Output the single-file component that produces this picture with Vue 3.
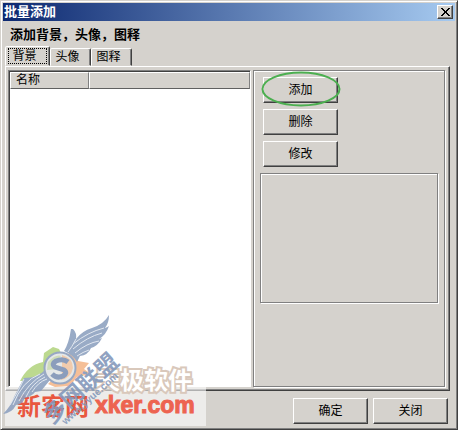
<template>
    <main class="window">
        <header class="title-bar">
            <h1>批量添加</h1>
            <button class="close-btn" type="button" aria-label="关闭">
                <svg width="9" height="8" viewBox="0 0 9 8" shape-rendering="crispEdges">
                    <path d="M0 0h2v1h1v1h1v1h1V2h1V1h1V0h2v1H8v1H7v1H6v2h1v1h1v1h1v1H7V7H6V6H5V5H4v1H3v1H2v1H0V7h1V6h1V5h1V3H2V2H1V1H0z" />
                </svg>
            </button>
        </header>

        <h2>添加背景，头像，图释</h2>

        <div class="tabs" role="tablist">
            <button v-for="tab in tabs" :key="tab" type="button" role="tab" :aria-selected="currentTab === tab"
                :class="{ active: currentTab === tab }" @click="currentTab = tab">
                <span>{{ tab }}</span>
            </button>
        </div>

        <section class="panel">
            <div class="list">
                <table>
                    <thead>
                        <tr>
                            <th class="name-col">名称</th>
                            <th></th>
                        </tr>
                    </thead>
                </table>
            </div>
            <div class="group">
                <div v-for="action in actions" :key="action" class="action">
                    <button class="btn" type="button">{{ action }}</button>
                    <svg v-if="action === '添加'" class="marker" width="80" height="36" viewBox="0 0 80 36">
                        <ellipse cx="40" cy="18" rx="38.5" ry="16.5" />
                    </svg>
                </div>
                <div class="preview"></div>
            </div>
        </section>

        <footer class="footer">
            <button class="btn" type="button">确定</button>
            <button class="btn" type="button">关闭</button>
        </footer>

        <svg class="watermark" width="208" height="122" viewBox="0 306 208 122">
            <rect x="4" y="386" width="201" height="39" fill="#fff" opacity=".58" />
            <text class="brand-back" x="95" y="388">天极软件</text>
            <text class="site-cn" x="16" y="414">新客网</text>
            <text class="site-en" x="94" y="412">xker.com</text>
            <g class="emblem">
                <path fill="#b5d583" d="M19 380q8-16 23-19l1-9 9-6 6 2 3 6-15 10-5 18q-12-3-22-2z" />
                <path fill="#f5b98c" d="M59 352l13 1 5 7 11 2-5 6 7 5-14 3-7 9-15 1-7-3 13-13z" />
                <path class="wing" d="M63 350q5-8 7-22h2q4 4 3 10 6-8 16-11 12-4 17-13 0 8-4 13 3-1 4-2-3 9-10 13l3-1q-4 8-11 10-3 7-11 8l-3 6q-4-7-13-11z" />
                <path class="wing" d="M45 368q-8 9-22 9-5 9-10 19-3 9-11 17 9-1 13-9 6 0 9-7 7-2 10-6l6-1 9-11q-5-4-4-11z" />
                <g class="feathers">
                    <path d="M75 338q-4 8-8 13M103 327q-16 4-31 16M101 332q-15 4-29 16M98 340q-12 2-24 12M88 349q-6 2-12 6" />
                    <path d="M39 373q-18 7-27 31M43 373q-16 9-25 27M44 376q-13 6-19 20M46 378q-9 3-15 13M23 378q-6 13-14 26" />
                </g>
                <circle cx="59" cy="367" r="15.5" fill="#e3e6e6" stroke="#8d9fbd" stroke-width="2" />
                <path fill="#f0c6a5" d="M61 354q11 3 11 13-2 10-12 12l1-9z" />
                <path fill="#cadab2" d="M47 361q8-8 13-6l-8 9 4 4-10 1z" />
                <path class="letter" d="M67 361q-5-4-12-1-5 3-1 6l9 3q4 3-1 6-6 3-11-2" />
                <g transform="translate(51 424) rotate(-42)">
                    <text class="league" x="0" y="0">多网联盟</text>
                    <text class="league-url" x="10" y="9">www.yyue.com</text>
                </g>
            </g>
        </svg>
    </main>
</template>

<script setup>
import { ref } from 'vue';

const tabs = ['背景', '头像', '图释'];
const currentTab = ref('背景');

const actions = ['添加', '删除', '修改'];
</script>

<style>
body {
    background: #d5d2cd;
}
</style>

<style scoped>
.window {
    position: relative;
    box-sizing: border-box;
    min-height: 100vh;
    display: flex;
    flex-direction: column;
    padding: 1px;
    border: 1px solid #d5d2cd;
    border-right: 1px solid #404040;
    border-bottom: 1px solid #404040;
    box-shadow: inset 1px 1px #fff, inset -1px -1px #808080;
    background: #d5d2cd;
    color: #000;
    font: 12px/16px "Liberation Sans", "Noto Sans CJK SC", sans-serif;
}

button {
    font: inherit;
    color: inherit;
    padding: 0;
}

.title-bar {
    display: flex;
    align-items: center;
    justify-content: space-between;
    height: 18px;
    margin: 1px 1px 0;
    padding: 0 2px 0 1px;
    background: linear-gradient(90deg, #0c2870, #a6caf0);
}

h1,
h2 {
    margin: 0;
    font-size: 13px;
    line-height: 18px;
}

h1 {
    color: #fff;
}

h2 {
    padding: 5px 8px 2px;
}

.close-btn {
    display: flex;
    align-items: center;
    justify-content: center;
    width: 16px;
    height: 14px;
    border: 1px solid;
    border-color: #fff #404040 #404040 #fff;
    box-shadow: inset -1px -1px #808080;
    background: #d5d2cd;
}

.tabs {
    display: flex;
    align-items: flex-end;
    height: 20px;
    padding-left: 3px;
}

.tabs button {
    height: 18px;
    width: 41px;
    border: 1px solid;
    border-color: #fff #404040 transparent #fff;
    border-radius: 2px 2px 0 0;
    box-shadow: inset -1px 0 #808080;
    background: #d5d2cd;
}

.tabs .active {
    width: 45px;
    height: 20px;
}

.tabs span {
    display: block;
    padding-right: 6px;
    line-height: 16px;
}

.tabs .active span {
    margin: 0 2px;
    border: 1px dotted #000;
    line-height: 14px;
}

.panel {
    flex: 1;
    display: flex;
    gap: 2px;
    margin: 0 6px 0 3px;
    padding: 3px 3px 3px 2px;
    border: 1px solid;
    border-color: #fff #404040 #404040 #fff;
    box-shadow: inset -1px -1px #808080;
}

.list {
    flex: 1;
    border: 1px solid;
    border-color: #808080 #fff #fff #808080;
    box-shadow: inset 1px 1px #404040;
    background: #fff;
    padding: 1px 0 0 1px;
}

table {
    width: 100%;
    border-collapse: separate;
    border-spacing: 0;
    table-layout: fixed;
}

th {
    height: 15px;
    padding: 0 5px;
    border: 1px solid;
    border-color: #fff #808080 #606060 #fff;
    background: #d5d2cd;
    font-weight: normal;
    line-height: 15px;
    text-align: left;
}

.name-col {
    width: 67px;
}

.group {
    width: 178px;
    padding: 6px;
    border: 1px solid #808080;
    box-shadow: inset 1px 1px #fff, 1px 1px #fff;
    margin-right: 1px;
}

.action {
    position: relative;
    display: flex;
    margin: 0 0 6px 3px;
}

.btn {
    width: 75px;
    height: 26px;
    border: 1px solid;
    border-color: #fff #404040 #404040 #fff;
    box-shadow: inset -1px -1px #808080;
    background: #d5d2cd;
}

.marker {
    position: absolute;
    left: -2px;
    top: -6px;
    fill: none;
    stroke: #4caf50;
    stroke-width: 2;
    pointer-events: none;
}

.preview {
    height: 128px;
    border: 1px solid #808080;
    box-shadow: inset 1px 1px #fff, 1px 1px #fff;
}

.footer {
    display: flex;
    justify-content: flex-end;
    gap: 5px;
    padding: 7px 8px 4px;
}

.watermark {
    position: absolute;
    left: 0;
    bottom: 0;
    overflow: visible;
    pointer-events: none;
    font-family: "Liberation Sans", "Noto Sans CJK SC", sans-serif;
    font-weight: bold;
}

.brand-back {
    font-size: 24px;
    fill: #fff;
    stroke: #d9c8bb;
    stroke-width: 4;
    paint-order: stroke;
}

.site-cn {
    font-size: 24px;
    fill: #e9573f;
}

.site-en {
    font-size: 23px;
    fill: #ed6350;
    stroke: #ed6350;
    stroke-width: 1;
}

.emblem {
    opacity: 0.9;
}

.wing {
    fill: #8fa2c0;
}

.feathers {
    fill: none;
    stroke: #dfe6ef;
    stroke-width: 1;
}

.letter {
    fill: none;
    stroke: #7f93b5;
    stroke-width: 5;
}

.league {
    font-size: 23px;
    fill: #8498bb;
}

.league-url {
    font-size: 10px;
    fill: #8498bb;
}
</style>
